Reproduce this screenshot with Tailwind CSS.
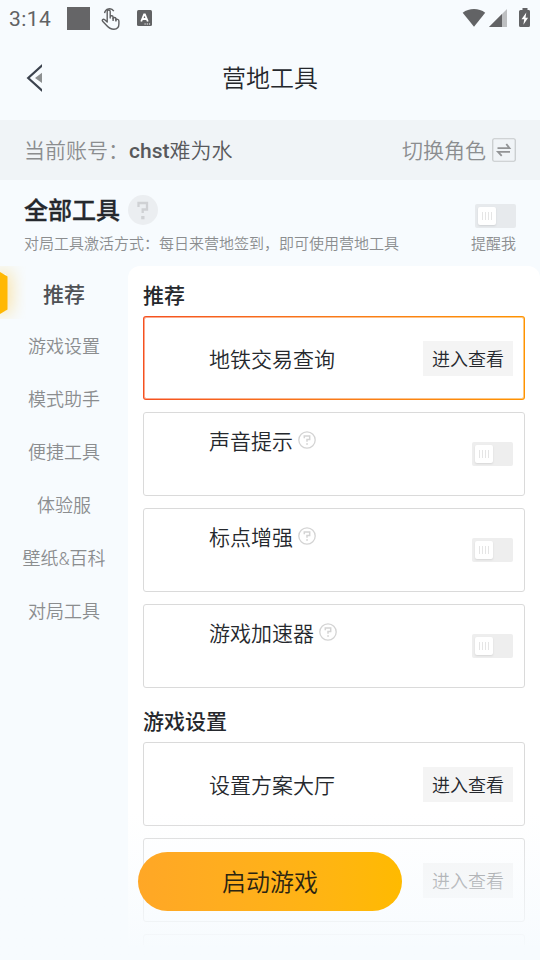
<!DOCTYPE html>
<html lang="zh-CN">
<head>
<meta charset="utf-8">
<meta name="viewport" content="width=device-width, initial-scale=1">
<title>营地工具</title>
<script src="https://cdn.jsdelivr.net/npm/@tailwindcss/browser@4"></script>
</head>
<body class="bg-[#f7fbfe]">
<svg class="hidden">
  <symbol id="help" viewBox="0 0 18 18">
    <circle cx="9" cy="9" r="8.2" fill="none" stroke="#d4d4d4" stroke-width="1.3"/>
    <path d="M6.300 7.200V5H11.700V8.600H9V10.800" fill="none" stroke="#d4d4d4" stroke-width="1.500"/>
    <path d="M8.200 12.200h1.700v1.600H8.200z" fill="#d4d4d4"/>
  </symbol>
</svg>
<div class="relative flex h-[960px] w-[540px] flex-col overflow-hidden font-['Roboto','Noto_Sans_CJK_SC',sans-serif] font-[350] text-[#25282d]">
  <div class="flex h-9 shrink-0 items-center pl-[9px] font-normal text-[#616264]">
    <span class="w-[58px] text-[21px] leading-9 tracking-[0.4px] pt-px">3:14</span>
    <span class="mt-[1px] size-[23px] bg-[#656567]"></span>
    <svg class="ml-[11px] h-6 w-[20px]" viewBox="0 0 20 24" fill="none" stroke="#5f6062" stroke-width="1.4" stroke-linejoin="round">
      <path d="M3.600 7.200A5 5 0 0 1 12.800 5.200"/>
      <path d="M6.200 16V5.500c0-2 3-2 3 0v6.500V10.500c.5-1.100 2.700-.9 2.900.4v1.800c0-1.600 2.800-1.500 2.800.2v1.200c.3-1.200 3-1 3 .8v3.200c0 3.400-1.600 5.100-5 5.100-3.800 0-5-.9-7-3.400l-4.300-4.600c-.9-1.200.6-2.500 1.900-1.600z"/>
      <path d="M12.100 11.500v3.500M14.900 12.500v3"/>
    </svg>
    <svg class="ml-[16px] h-4 w-[15px]" viewBox="0 0 15 16">
      <rect width="15" height="16" rx="1.500" fill="#616264"/>
      <path d="M4.200 11.500 7.100 4.300h.8l2.900 7.200M5.300 9h4.600" stroke="#fff" stroke-width="1.800" fill="none"/>
      <path d="M7.500 14h1.200m1 0h1.200m1 0h1.200" stroke="#fff" stroke-width="1.200"/>
    </svg>
    <svg class="ml-auto h-5 w-[68px] mr-[10px]" viewBox="0 0 68 20" fill="#626365">
      <path d="M.7 4.800C7-.2 17-.2 23.200 4.800L12 18.800z"/>
      <path d="M27 19 45 1v18z" fill="#bdbfc1"/>
      <path d="M27 19 40 6v13z"/>
      <path d="M60.500 0h5v2H67q1 0 1 1.500v14q0 1.500-1.500 1.500h-8Q57 19 57 17.500V3.500Q57 2 58.500 2h2z"/>
      <path d="M64.300 4.500 59.500 11.300h2.700l-.8 5.500 4.700-7h-2.600z" fill="#fff"/>
    </svg>
  </div>

  <header class="relative flex h-[84px] shrink-0 items-center justify-center pt-[2px]">
    <svg class="absolute left-[26px] top-[28px] h-[28px] w-[16px]" viewBox="0 0 16 28">
      <path d="M16.500 1 2.200 14 16.500 27" fill="none" stroke="#3c434e" stroke-width="2.200"/>
      <path d="M16 8.800V19L9 14z" fill="#8d9091"/>
    </svg>
    <h1 class="text-2xl font-[350] leading-9">营地工具</h1>
  </header>

  <section class="flex h-[60px] shrink-0 items-center bg-[#f0f4f7] px-6 text-[21px] leading-8">
    <span class="w-[105px] pt-[2px] text-[#8b8d8f]">当前账号：</span>
    <span class="pt-[2px] font-medium text-[#58595c]">chst<span class="font-[350]">难为水</span></span>
    <span class="ml-auto pt-[2px] text-[#8b8d8f]">切换角色</span>
    <svg class="ml-[6px] size-6" viewBox="0 0 24 24" fill="none">
      <rect x=".75" y=".75" width="22.500" height="22.500" rx="1.500" stroke="#c5c8ca" stroke-width="1.200"/>
      <path d="M5.500 10.200h12L14.300 6M18 13.800h-12l3.700 4" stroke="#929496" stroke-width="1.800"/>
    </svg>
  </section>

  <section class="flex h-[86px] shrink-0 justify-between px-6 pt-[15px]">
    <div>
      <div class="flex h-[30px] items-center">
        <h2 class="pt-[2px] text-2xl font-medium leading-[30px] [-webkit-text-stroke:0.3px_currentColor]">全部工具</h2>
        <svg class="ml-2 size-[30px]" viewBox="0 0 30 30">
          <circle cx="15" cy="15" r="15" fill="#ebeef1"/>
          <path d="M10.500 12V8h8.500v6.500H14.700V18" fill="none" stroke="#cfd1d4" stroke-width="2.300"/>
          <path d="M13.200 21h3.300v3.300h-3.300z" fill="#cfd1d4"/>
        </svg>
      </div>
      <p class="mt-[8px] text-[15px] leading-[22px] text-[#8b8d8f]">对局工具激活方式：每日来营地签到，即可使用营地工具</p>
    </div>
    <div class="flex flex-col items-end pt-[9px]">
      <div class="flex h-6 w-[41px] items-center rounded-[2px] bg-[#e7eaed] pl-[3px]">
        <span class="flex size-[18px] items-center justify-center gap-[2px] rounded-[2px] bg-white shadow-[0_1px_2px_#0000001a]"><i class="h-2 w-px bg-[#e5e5e5]"></i><i class="h-2 w-px bg-[#e5e5e5]"></i><i class="h-2 w-px bg-[#e5e5e5]"></i><i class="h-2 w-px bg-[#e5e5e5]"></i></span>
      </div>
      <span class="mt-[5px] text-[15px] leading-[22px] text-[#8b8d8f]">提醒我</span>
    </div>
  </section>

  <div class="flex h-[679px] shrink-0">
    <nav class="relative flex w-32 shrink-0 flex-col items-center text-lg text-[#8b8d8f]">
      <div class="absolute left-0 top-0 h-[53px] w-[26px] overflow-hidden">
        <div class="mt-2 h-[37px] w-[6px] shadow-[0_0_18px_2px_#ffb80390]"></div>
      </div>
      <svg class="absolute left-0 top-[6px] h-[42px] w-2" viewBox="0 0 8 42"><path d="M0 0 7.500 4.500v33L0 42z" fill="#ffb803"/></svg>
      <a class="flex h-[54px] items-center pb-px pt-[6px] text-[21px] font-medium text-[#4e5155]">推荐</a>
      <a class="flex h-[53px] items-center">游戏设置</a>
      <a class="flex h-[53px] items-center">模式助手</a>
      <a class="flex h-[53px] items-center">便捷工具</a>
      <a class="flex h-[53px] items-center">体验服</a>
      <a class="flex h-[53px] items-center">壁纸&amp;百科</a>
      <a class="flex h-[53px] items-center">对局工具</a>
    </nav>
    <main class="flex w-[412px] flex-col overflow-hidden rounded-t-[12px] bg-white px-[15px] text-[21px]">
      <h3 class="h-[50px] shrink-0 pt-[14px] font-medium leading-8">推荐</h3>
      <div class="h-[84px] shrink-0 rounded-[3px] bg-linear-to-r from-[#f5501f] via-[#f97a18] to-[#ff9300] p-px">
        <div class="flex h-full items-center justify-between rounded-[2px] border border-white/50 bg-white bg-clip-padding pl-[64px] pr-[10px]">
          <span class="pt-[5px]">地铁交易查询</span>
          <button class="h-[35px] w-[90px] bg-[#f4f4f4] pt-[3px] text-lg">进入查看</button>
        </div>
      </div>
      <div class="mt-3 flex h-[84px] shrink-0 justify-between rounded-[3px] border border-[#dadada] pl-[65px] pr-[11px]">
        <div class="flex h-14 items-center"><span class="pt-[4px]">声音提示</span><svg class="mb-[3px] ml-[5px] size-[18px]"><use href="#help"/></svg></div>
        <div class="mt-[29px] flex h-6 w-[41px] items-center rounded-[2px] bg-[#eeeeee] pl-[3px]"><span class="flex size-[18px] items-center justify-center gap-[2px] rounded-[2px] bg-white shadow-[0_1px_2px_#0000001a]"><i class="h-2 w-px bg-[#e5e5e5]"></i><i class="h-2 w-px bg-[#e5e5e5]"></i><i class="h-2 w-px bg-[#e5e5e5]"></i><i class="h-2 w-px bg-[#e5e5e5]"></i></span></div>
      </div>
      <div class="mt-3 flex h-[84px] shrink-0 justify-between rounded-[3px] border border-[#dadada] pl-[65px] pr-[11px]">
        <div class="flex h-14 items-center"><span class="pt-[4px]">标点增强</span><svg class="mb-[3px] ml-[5px] size-[18px]"><use href="#help"/></svg></div>
        <div class="mt-[29px] flex h-6 w-[41px] items-center rounded-[2px] bg-[#eeeeee] pl-[3px]"><span class="flex size-[18px] items-center justify-center gap-[2px] rounded-[2px] bg-white shadow-[0_1px_2px_#0000001a]"><i class="h-2 w-px bg-[#e5e5e5]"></i><i class="h-2 w-px bg-[#e5e5e5]"></i><i class="h-2 w-px bg-[#e5e5e5]"></i><i class="h-2 w-px bg-[#e5e5e5]"></i></span></div>
      </div>
      <div class="mt-3 flex h-[84px] shrink-0 justify-between rounded-[3px] border border-[#dadada] pl-[65px] pr-[11px]">
        <div class="flex h-14 items-center"><span class="pt-[4px]">游戏加速器</span><svg class="mb-[3px] ml-[5px] size-[18px]"><use href="#help"/></svg></div>
        <div class="mt-[29px] flex h-6 w-[41px] items-center rounded-[2px] bg-[#eeeeee] pl-[3px]"><span class="flex size-[18px] items-center justify-center gap-[2px] rounded-[2px] bg-white shadow-[0_1px_2px_#0000001a]"><i class="h-2 w-px bg-[#e5e5e5]"></i><i class="h-2 w-px bg-[#e5e5e5]"></i><i class="h-2 w-px bg-[#e5e5e5]"></i><i class="h-2 w-px bg-[#e5e5e5]"></i></span></div>
      </div>
      <h3 class="h-[54px] shrink-0 pt-[18px] font-medium leading-8">游戏设置</h3>
      <div class="flex h-[84px] shrink-0 items-center justify-between rounded-[3px] border border-[#dadada] pl-[65px] pr-[11px]">
        <span class="pt-[5px]">设置方案大厅</span>
        <button class="h-[35px] w-[90px] bg-[#f4f4f4] pt-[3px] text-lg">进入查看</button>
      </div>
      <div class="mt-3 flex h-[84px] shrink-0 items-center justify-end rounded-[3px] border border-[#dadada] pr-[11px]">
        <button class="h-[35px] w-[90px] bg-[#f4f4f4] pt-[3px] text-lg text-[#25282d]/60">进入查看</button>
      </div>
      <div class="mt-3 h-[84px] shrink-0 rounded-[3px] border border-[#dadada]"></div>
    </main>
  </div>

  <div class="pointer-events-none absolute inset-x-0 bottom-0 h-[148px] bg-linear-to-b from-[#f7fbfe]/0 to-[#f7fbfe] to-95%"></div>
  <button class="absolute left-[138px] top-[852px] h-[59px] w-[264px] rounded-full bg-linear-to-r from-[#ffa726] to-[#ffba00] pt-[2px] text-2xl text-[#2b2412]">启动游戏</button>
</div>
</body>
</html>
